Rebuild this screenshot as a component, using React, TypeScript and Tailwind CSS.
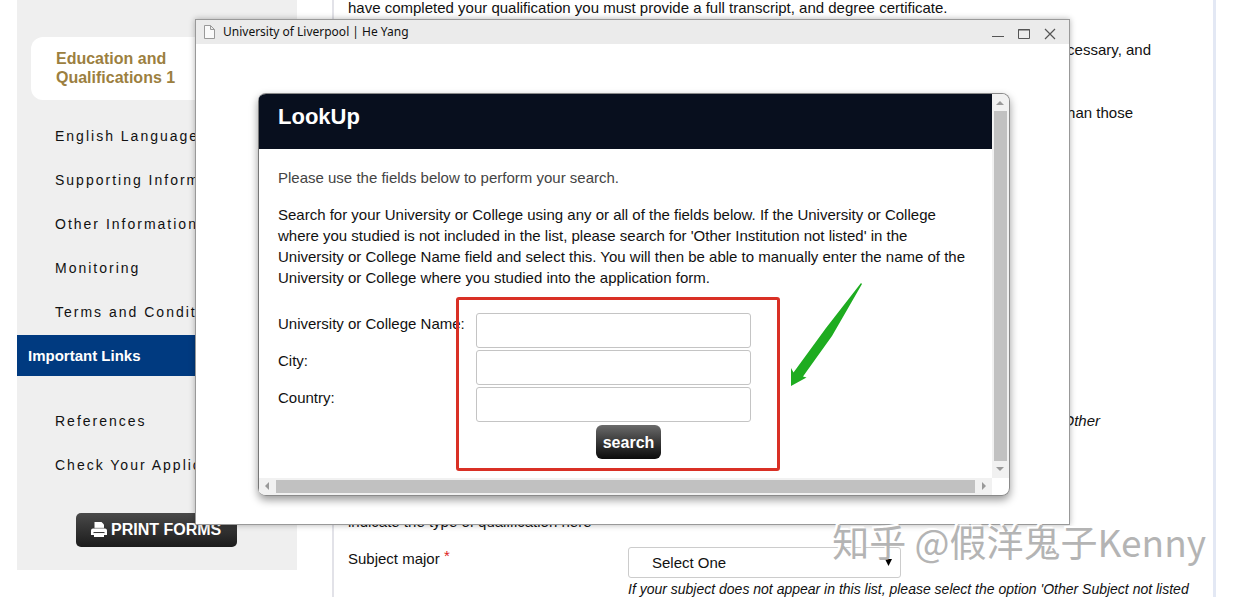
import type { ReactNode } from "react";

const links = [
  "English Language",
  "Supporting Information",
  "Other Information",
  "Monitoring",
  "Terms and Conditions",
];

const fields = [
  { id: "name", label: "University or College Name:" },
  { id: "city", label: "City:" },
  { id: "country", label: "Country:" },
];

function NavLink({ children }: { children: ReactNode }) {
  return (
    <a href="#" className="block h-11 pl-[38px] text-[14px] leading-[44px] tracking-[2px] whitespace-nowrap">
      {children}
    </a>
  );
}

function Sidebar() {
  return (
    <aside className="flex h-[570px] w-[280px] shrink-0 flex-col bg-[#efefef] pt-[37px]">
      <a
        href="#"
        className="ml-3.5 rounded-xl bg-white pt-3 pb-[13px] pl-[25px] text-[16px] leading-[19px] font-bold text-[#9c7f3f]"
      >
        Education and
        <br />
        Qualifications 1
      </a>
      <nav className="mt-[14px]">
        {links.map((l) => (
          <NavLink key={l}>{l}</NavLink>
        ))}
      </nav>
      <h2 className="mt-px bg-[#003a80] pl-[11px] text-[15px] leading-[41px] font-bold text-white">
        Important Links
      </h2>
      <nav className="mt-[23px]">
        <NavLink>References</NavLink>
        <NavLink>Check Your Application</NavLink>
      </nav>
      <button
        type="button"
        className="mt-[26px] ml-[59px] flex h-[34px] w-[161px] shrink-0 items-center gap-1 rounded-[5px] bg-linear-to-b from-[#4a4a4a] to-[#1c1c1c] pl-[15px] text-[16px] font-bold whitespace-nowrap text-white"
      >
        <svg className="h-4 w-4 shrink-0" viewBox="0 0 16 16" fill="currentColor" aria-hidden="true">
          <path d="M3.500 0h7l2.500 2.500V7h-9.500z" />
          <path d="M2 6.500h12a2 2 0 0 1 2 2V13h-16V8.500a2 2 0 0 1 2-2z" />
          <path d="M2.500 10h11v1.200h-11z" fill="#3a3a3a" />
          <path d="M3 11.200h10V15H3z" />
          <path d="M3 5.800h10v.8H3z" fill="#777" />
        </svg>
        PRINT FORMS
      </button>
    </aside>
  );
}

function Application() {
  return (
    <main className="mr-[21px] ml-[35px] min-w-0 flex-1 border-r-[3px] border-l-2 border-r-[#e3e8f4] border-l-[#e2e2e8] pl-3.5 text-[15px] leading-[21px]">
      <p className="-mt-[3px]">
        have completed your qualification you must provide a full transcript, and degree certificate.
      </p>
      <p className="mt-[21px] mr-[62px] text-right">cessary, and</p>
      <p className="mt-[42px] mr-20 text-right">han those</p>
      <p className="mt-[287px] mr-[113px] text-right italic">Other</p>
      <p className="mt-20">indicate the type of qualification here</p>
      <div className="mt-[15px] flex">
        <label htmlFor="major" className="w-[280px] shrink-0 pt-px">
          Subject major <span className="align-top text-[15px] leading-4 text-[#d22]">*</span>
        </label>
        <div className="min-w-0">
          <div className="relative h-[31px] w-[273px]">
            <select
              id="major"
              className="h-full w-full appearance-none rounded-[3px] border border-[#ccc] bg-white pl-[23px] text-[15px]"
            >
              <option>Select One</option>
            </select>
            <svg className="pointer-events-none absolute top-3 right-2 h-2 w-2" viewBox="0 0 8 8" aria-hidden="true">
              <path d="M0 0h7L3.500 7z" />
            </svg>
          </div>
          <p className="mt-px text-[14px] whitespace-nowrap italic">
            If your subject does not appear in this list, please select the option 'Other Subject not listed
          </p>
        </div>
      </div>
    </main>
  );
}

function LookUp() {
  return (
    <section className="mt-[49px] mr-[59px] ml-[62px] overflow-hidden rounded-lg border-t border-r border-b border-[#8a8a8a] shadow-[0_4px_8px_rgba(0,0,0,0.4)]">
      <div className="flex">
        <div className="min-w-0 flex-1 border-l border-[#777]">
          <h1 className="h-[55px] bg-[#080f1e] pt-2 pl-[19px] text-[22px] leading-[30px] font-bold text-white">
            LookUp
          </h1>
          <div className="relative h-[329px] pt-[18px] pl-[19px] text-[15px] leading-[21px]">
            <p className="text-[#444]">Please use the fields below to perform your search.</p>
            <p className="mt-4 mr-5">
              Search for your University or College using any or all of the fields below. If the University or College
              where you studied is not included in the list, please search for 'Other Institution not listed' in the
              University or College Name field and select this. You will then be able to manually enter the name of the
              University or College where you studied into the application form.
            </p>
            <form className="mt-[25px] flex flex-col gap-0.5">
              {fields.map((f) => (
                <div key={f.id} className="flex">
                  <label htmlFor={f.id} className="w-[198px] shrink-0 whitespace-nowrap">
                    {f.label}
                  </label>
                  <input
                    id={f.id}
                    type="text"
                    className="h-[35px] w-[275px] rounded-[3px] border border-[#c4c4c4] bg-white px-2"
                  />
                </div>
              ))}
              <button
                type="button"
                className="mt-px ml-[318px] h-[34px] w-[65px] rounded-md bg-linear-to-b from-[#6c6c6c] to-[#0c0c0c] text-[16px] font-bold text-white"
              >
                search
              </button>
            </form>
            <div className="pointer-events-none absolute top-[148px] left-[197px] h-[174px] w-[324px] rounded-[3px] border-3 border-[#d93025]" />
            <svg
              className="pointer-events-none absolute top-[133px] left-[531px] h-[105px] w-[74px]"
              viewBox="0 0 74 105"
              aria-hidden="true"
            >
              <path d="M71 1 72 2 42 54 13 94.500 16.500 95.500 1 104 1 86 3.500 90.500 36 46z" fill="#1eac20" />
            </svg>
          </div>
        </div>
        <div className="flex w-[17px] flex-col items-center bg-[#f1f1f1]">
          <svg className="h-[17px] w-[17px]" viewBox="0 0 17 17" fill="#999" aria-hidden="true">
            <path d="M4 11h8L8 7z" />
          </svg>
          <div className="w-[13px] flex-1 bg-[#c1c1c1]" />
          <svg className="h-[17px] w-[17px]" viewBox="0 0 17 17" fill="#999" aria-hidden="true">
            <path d="M4 6h8L8 10z" />
          </svg>
        </div>
      </div>
      <div className="mr-[17px] flex h-[17px] items-center border-l border-[#777] bg-[#f1f1f1]">
        <svg className="h-[17px] w-[17px]" viewBox="0 0 17 17" fill="#999" aria-hidden="true">
          <path d="M10 4v8L6 8z" />
        </svg>
        <div className="h-[13px] flex-1 bg-[#c1c1c1]" />
        <svg className="h-[17px] w-[17px]" viewBox="0 0 17 17" fill="#999" aria-hidden="true">
          <path d="M7 4v8l4-4z" />
        </svg>
      </div>
    </section>
  );
}

function PopupWindow() {
  return (
    <div
      role="dialog"
      aria-label="University of Liverpool | He Yang"
      className="absolute top-[19px] right-[167px] left-[195px] border border-[#999] bg-white pb-7 shadow-[0_0_6px_rgba(0,0,0,0.3)]"
    >
      <div className="flex h-6 items-center bg-[#ebebeb] pr-[13px] pl-2">
        <svg className="h-[14px] w-[11px]" viewBox="0 0 11 14" fill="#fafafa" stroke="#999" aria-hidden="true">
          <path d="M.5.5h6l4 4v9H.5zM6.500.5v4h4" />
        </svg>
        <span className="ml-2 flex-1 font-['Noto_Sans',sans-serif] text-[12px] leading-6">
          University of Liverpool | He Yang
        </span>
        <div className="flex items-center gap-3.5 pt-1">
          <button type="button" aria-label="Minimise">
            <svg className="h-3 w-3" viewBox="0 0 12 12" stroke="#555" aria-hidden="true">
              <path d="M0 8.500h12" />
            </svg>
          </button>
          <button type="button" aria-label="Maximise">
            <svg className="h-3 w-3" viewBox="0 0 12 12" fill="none" stroke="#555" aria-hidden="true">
              <path d="M.5 1.500h11v9H.5zM0 2h12" />
            </svg>
          </button>
          <button type="button" aria-label="Close">
            <svg className="h-3 w-3" viewBox="0 0 12 12" stroke="#555" strokeWidth="1.200" aria-hidden="true">
              <path d="M1 1l10 10M11 1L1 11" />
            </svg>
          </button>
        </div>
      </div>
      <LookUp />
    </div>
  );
}

export default function App() {
  return (
    <div className="relative h-screen overflow-hidden bg-white pl-[17px] font-['Liberation_Sans',Arial,sans-serif] text-[#111]">
      <div className="flex h-full">
        <Sidebar />
        <Application />
      </div>
      <PopupWindow />
      <div className="pointer-events-none absolute right-[31px] bottom-[30px] font-['Noto_Sans_CJK_SC',sans-serif] text-[37px] leading-[52px] whitespace-nowrap text-[#b4b4b4] [text-shadow:-1px_-1px_0_#fff,-2px_-2px_0_#fff]">
        知乎 @假洋鬼子Kenny
      </div>
    </div>
  );
}
